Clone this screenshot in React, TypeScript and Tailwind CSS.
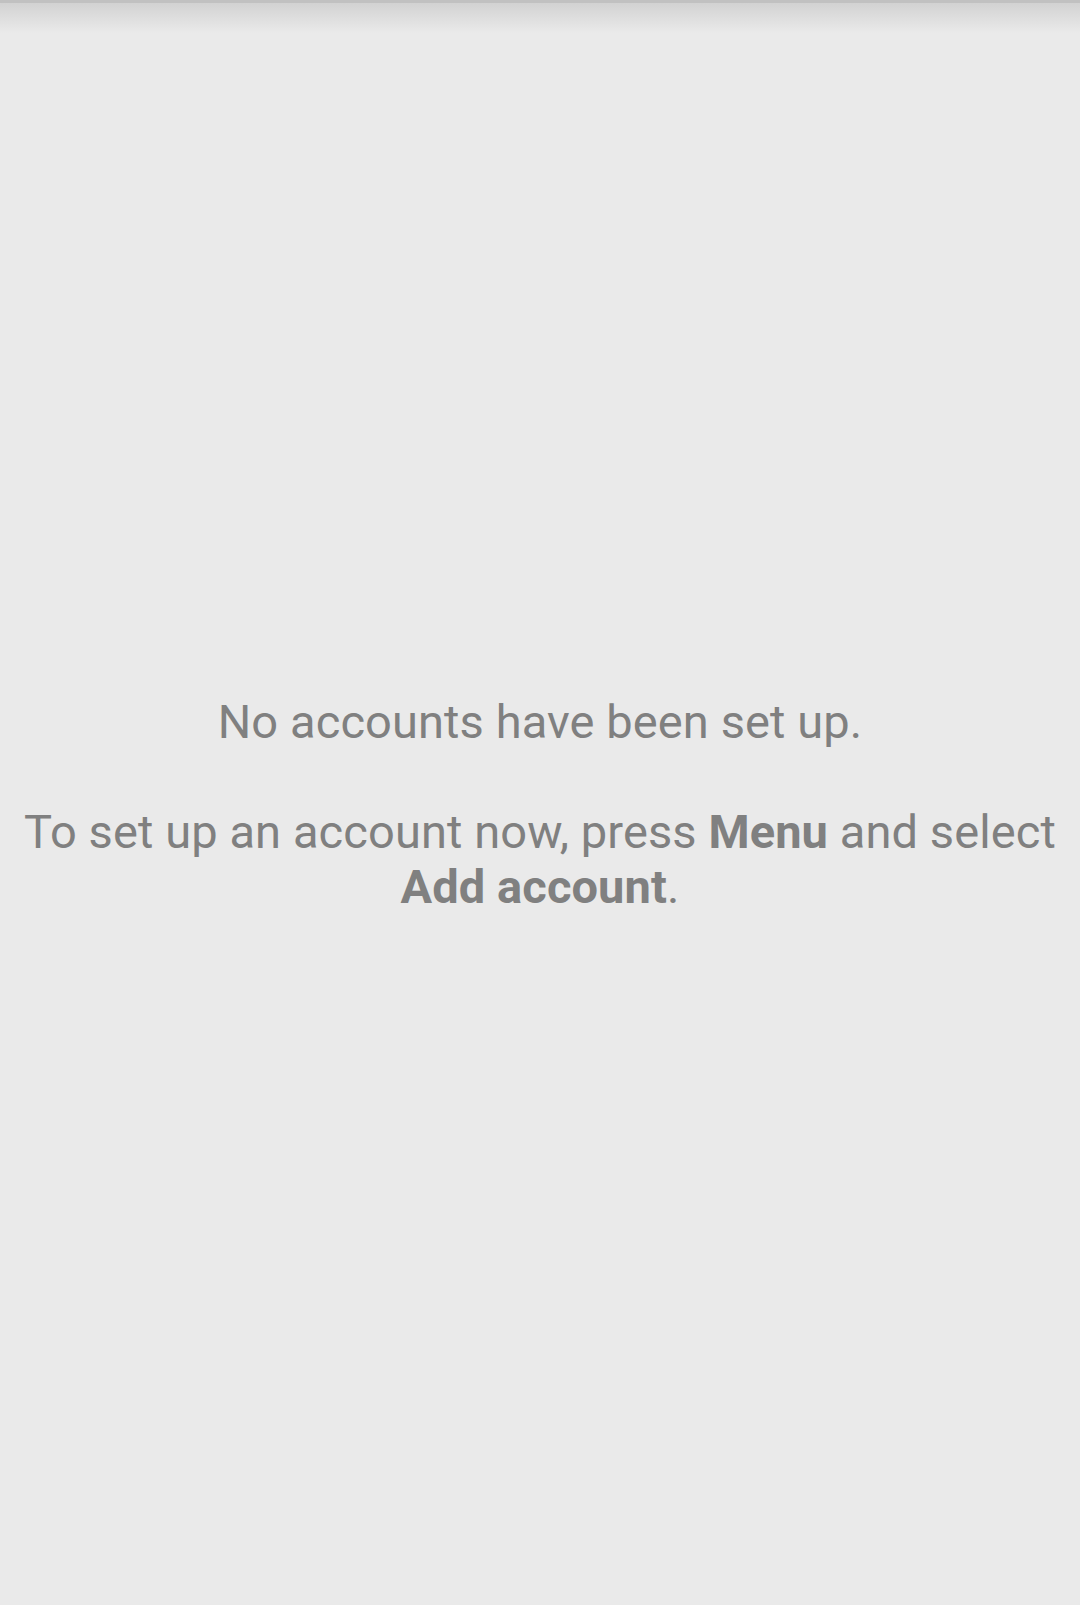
import React from 'react';

export default function App() {
  return (
    <div className="relative flex h-[1605px] w-[1080px] flex-col bg-[#eaeaea] font-['Roboto',sans-serif]">
      <div className="absolute inset-x-0 top-0 h-[3px] bg-[#c1c1c1]" />
      <div className="absolute inset-x-0 top-[3px] h-[30px] bg-gradient-to-b from-[#d2d2d2] to-[#eaeaea]" />
      <div className="flex flex-1 items-center justify-center px-4 pt-[3px]">
        <p className="text-center text-[47px] leading-[55px] tracking-[0.1px] text-[#808080]">
          No accounts have been set up.
          <br />
          <br />
          To set up an account now, press <b className="font-bold">Menu</b> and select{' '}
          <b className="font-bold">Add account</b>.
        </p>
      </div>
    </div>
  );
}
